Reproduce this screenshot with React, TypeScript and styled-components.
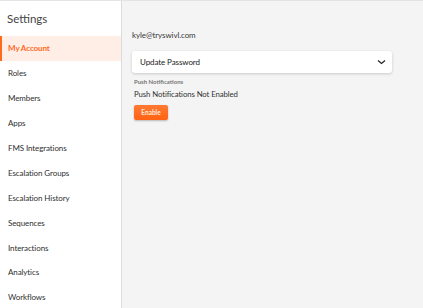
import React from "react";
import styled, { createGlobalStyle } from "styled-components";

const Global = createGlobalStyle`
  html, body { margin: 0; padding: 0; }
  body { font-family: "Lato", "Open Sans", sans-serif; background: #f4f4f4; }
  * { box-sizing: border-box; }
`;

const Page = styled.div`
  display: flex;
  width: 423px;
  height: 308px;
  overflow: hidden;
  border-top: 1px solid #e4e4e4;
`;

const Sidebar = styled.nav`
  width: 122px;
  flex: none;
  background: #fff;
  border-right: 1px solid #dcdcdc;
  display: flex;
  flex-direction: column;
`;

const Title = styled.h1`
  flex: none;
  margin: 0;
  padding: 11px 0 0 7px;
  height: 35px;
  font-size: 11.5px;
  font-weight: 400;
  color: #444;
`;

const NavItem = styled.div<{ $active?: boolean }>`
  height: 24.9px;
  flex: none;
  display: flex;
  align-items: center;
  padding-left: 6px;
  font-size: 8px;
  letter-spacing: -0.1px;
  font-weight: ${(p) => (p.$active ? 700 : 400)};
  color: ${(p) => (p.$active ? "#ff6a1c" : "#2f2f2f")};
  background: ${(p) => (p.$active ? "#ffeee6" : "transparent")};
  border-left: 2px solid ${(p) => (p.$active ? "#ff6a1c" : "transparent")};
`;

const Content = styled.main`
  flex: 1;
  padding: 28px 31px 0 10px;
  display: flex;
  flex-direction: column;
  align-items: flex-start;
`;

const Email = styled.div`
  font-size: 8px;
  letter-spacing: -0.1px;
  color: #3a3a3a;
  height: 12px;
  line-height: 12px;
`;

const Card = styled.div`
  margin-top: 10px;
  width: 100%;
  height: 22px;
  background: #fff;
  border-radius: 3px;
  box-shadow: 0 1px 3px rgba(0, 0, 0, 0.18);
  display: flex;
  align-items: center;
  justify-content: space-between;
  padding: 0 5px 0 8px;
  font-size: 8px;
  letter-spacing: -0.1px;
  color: #222;
`;

const Label = styled.div`
  margin: 5px 0 0 2px;
  font-size: 6px;
  color: #777;
  font-weight: 700;
`;

const Status = styled.div`
  margin: 4px 0 0 2px;
  font-size: 7.8px;
  letter-spacing: -0.1px;
  color: #333;
`;

const EnableButton = styled.button`
  margin: 6px 0 0 2px;
  width: 34px;
  height: 15px;
  border: none;
  border-radius: 2px;
  background: linear-gradient(#ff7a33, #ff6212);
  color: #ffe9dc;
  font-family: inherit;
  font-size: 6.5px;
  font-weight: 700;
  padding: 0;
  box-shadow: 0 1px 2px rgba(0, 0, 0, 0.25);
`;

const items = [
  "My Account",
  "Roles",
  "Members",
  "Apps",
  "FMS Integrations",
  "Escalation Groups",
  "Escalation History",
  "Sequences",
  "Interactions",
  "Analytics",
  "Workflows",
];

export default function App() {
  return (
    <>
      <Global />
      <Page>
        <Sidebar>
          <Title>Settings</Title>
          {items.map((it, i) => (
            <NavItem key={it} $active={i === 0}>
              {it}
            </NavItem>
          ))}
        </Sidebar>
        <Content>
          <Email>kyle@tryswivl.com</Email>
          <Card>
            <span>Update Password</span>
            <svg width="11" height="10" viewBox="0 0 11 10">
              <path d="M2 3.5 L5.5 6.5 L9 3.5" fill="none" stroke="#222" strokeWidth="1.2" />
            </svg>
          </Card>
          <Label>Push Notifications</Label>
          <Status>Push Notifications Not Enabled</Status>
          <EnableButton>Enable</EnableButton>
        </Content>
      </Page>
    </>
  );
}
